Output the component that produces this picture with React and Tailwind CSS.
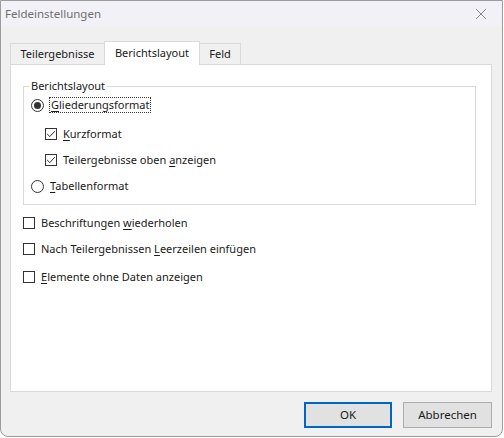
import React from 'react';

const font = "font-['Noto_Sans',sans-serif]";

function Check({ checked }) {
  return (
    <span className="w-[12px] h-[12px] border border-[#333333] bg-white flex items-center justify-center shrink-0">
      {checked && (
        <svg width="10" height="10" viewBox="0 0 10 10">
          <path d="M1.2 5 L3.8 7.6 L8.8 2.2" fill="none" stroke="#333333" strokeWidth="1" />
        </svg>
      )}
    </span>
  );
}

function Radio({ checked }) {
  return (
    <span className="w-[13px] h-[13px] rounded-full border border-[#333333] bg-white flex items-center justify-center shrink-0">
      {checked && <span className="w-[7px] h-[7px] rounded-full bg-[#333333]" />}
    </span>
  );
}

// label with one underlined access key
function Label({ before, u, after, focus }) {
  return (
    <span className={focus ? 'outline outline-1 outline-dotted outline-[#333] outline-offset-0 px-px leading-[14px]' : ''}>
      {before}<span className="underline underline-offset-2">{u}</span>{after}
    </span>
  );
}

function Row({ control, children, className = '' }) {
  return (
    <div className={`flex items-center gap-[6px] h-[16px] ${className}`}>
      {control}
      {children}
    </div>
  );
}

export default function App() {
  return (
    <div className={`w-[504px] h-[438px] bg-white ${font} text-[11px] text-[#1a1a1a]`}>
      <div className="w-[503px] h-[437px] bg-[#f0f0f0] border border-[#9c9c9c] rounded-b-[8px] overflow-hidden flex flex-col">
        {/* Title bar */}
        <div className="h-[25px] bg-[#f3f1f8] flex items-center justify-between pl-[4px] pr-[14px] shrink-0">
          <span className="text-[#6f6f6f] text-[11.5px]">Feldeinstellungen</span>
          <svg width="14" height="14" viewBox="0 0 14 14">
            <path d="M2 2 L12 12 M12 2 L2 12" stroke="#8a8a8a" strokeWidth="1" />
          </svg>
        </div>

        <div className="flex-1 flex flex-col pl-[9px] pr-[10px] pt-[15px]">
          {/* Tabs */}
          <div className="flex items-end h-[23px] relative z-10">
            <div className="w-[95px] h-[21px] flex items-center justify-center border border-b-0 border-[#d9d9d9] bg-[#f0f0f0]">
              Teilergebnisse
            </div>
            <div className="w-[96px] h-[24px] -mb-px flex justify-center pt-[3px] border border-b-0 border-[#d9d9d9] bg-white -ml-px">
              Berichtslayout
            </div>
            <div className="w-[42px] h-[21px] flex items-center justify-center border border-b-0 border-[#d9d9d9] bg-[#f0f0f0] -ml-px">
              Feld
            </div>
          </div>

          {/* Panel */}
          <div className="w-[482px] h-[328px] bg-white border border-[#d9d9d9] pl-[12px] pt-[14px]">
            <div className="w-[453px] h-[119px] border border-[#d9d9d9] relative mt-[7px] pt-[10px] pl-[7px]">
              <span className="absolute -top-[9px] left-[5px] bg-white px-[2px] leading-[16px]">Berichtslayout</span>
              <Row control={<Radio checked />} className="gap-[5px]">
                <Label u="G" after="liederungsformat" focus />
              </Row>
              <div className="pl-[14px] pt-[13px] flex flex-col gap-[10px]">
                <Row control={<Check checked />}>
                  <Label u="K" after="urzformat" />
                </Row>
                <Row control={<Check checked />}>
                  <Label before="Teilergebnisse oben " u="a" after="nzeigen" />
                </Row>
              </div>
              <Row control={<Radio />} className="mt-[10px] gap-[5px]">
                <Label u="T" after="abellenformat" />
              </Row>
            </div>

            <div className="flex flex-col mt-[10px]">
              <Row control={<Check />}>
                <Label before="Beschriftungen " u="w" after="iederholen" />
              </Row>
              <Row control={<Check />} className="mt-[10px]">
                <Label before="Nach Teilergebnissen " u="L" after="eerzeilen einfügen" />
              </Row>
              <Row control={<Check />} className="mt-[12px]">
                <Label u="E" after="lemente ohne Daten anzeigen" />
              </Row>
            </div>
          </div>

          {/* Buttons */}
          <div className="flex justify-end gap-[11px] mt-[10px]">
            <button className="w-[88px] h-[26px] bg-[#e1e1e1] border-2 border-[#0067c0] flex items-center justify-center text-[11.5px]">
              OK
            </button>
            <button className="w-[89px] h-[26px] bg-[#e1e1e1] border border-[#adadad] flex items-center justify-center text-[11.5px]">
              Abbrechen
            </button>
          </div>
        </div>
      </div>
    </div>
  );
}
